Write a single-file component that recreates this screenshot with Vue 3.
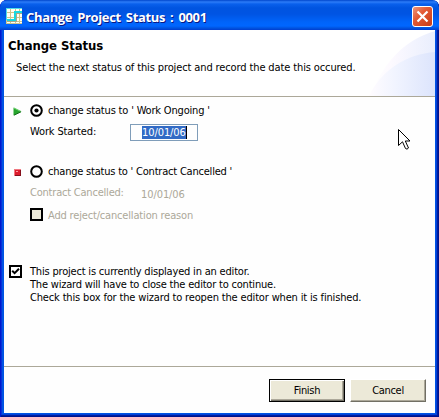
<script setup>
import { ref } from 'vue'

const choice = ref('ongoing')
const reopen = ref(true)
const date = '10/01/06'
</script>

<template>
  <main class="window">
    <header class="titlebar">
      <svg class="app-icon" width="16" height="16" viewBox="0 0 16 16" shape-rendering="crispEdges">
        <rect width="16" height="16" fill="#cdc48c" />
        <path d="M1 1h3v3H1zM5 1h4v3H5zM10 1h3v3H10zM14 1h2v3h-2zM1 5h3v4H1zM5 5h4v4H5zM10 5h3v4H10zM14 5h2v4h-2zM1 10h3v3H1zM5 10h4v3H5zM10 10h3v3H10zM14 10h2v3h-2zM1 14h3v1H1zM5 14h4v1H5zM10 14h3v1H10zM14 14h2v1h-2z" fill="#fffff4" />
        <path d="M0 .5H16M.5 0V12" fill="none" stroke="#52dce8" />
        <path d="M1 12H9V4H16" fill="none" stroke="#18d8e0" stroke-width="2" />
        <path d="M1 13.5H10.5V5.5H16" fill="none" stroke="#a8a888" />
      </svg>
      <h1 class="title">Change Project Status : 0001</h1>
      <button class="close" aria-label="Close">
        <svg width="21" height="21" viewBox="0 0 21 21">
          <defs>
            <linearGradient id="red" x1="0" y1="0" x2="1" y2="1">
              <stop offset="0" stop-color="#f09a80" />
              <stop offset=".4" stop-color="#e35a35" />
              <stop offset="1" stop-color="#c83a14" />
            </linearGradient>
          </defs>
          <rect x=".5" y=".5" width="20" height="20" rx="2.5" fill="url(#red)" stroke="#fff" />
          <path d="M5.5 5.5l10 10M15.5 5.5l-10 10" stroke="#fff" stroke-width="2.2" />
        </svg>
      </button>
    </header>

    <div class="client">
      <section class="banner">
        <svg class="swoosh" width="66" height="66" viewBox="0 0 66 66">
          <defs>
            <linearGradient id="fadeA" x1="0" y1="0" x2="1" y2="0">
              <stop offset="0" stop-color="#fff" />
              <stop offset=".3" stop-color="#fdfaff" />
              <stop offset="1" stop-color="#e9eefd" />
            </linearGradient>
            <linearGradient id="fadeB" x1="0" y1="0" x2="1" y2="0">
              <stop offset="0" stop-color="#fffcff" />
              <stop offset=".4" stop-color="#f1f4ff" />
              <stop offset="1" stop-color="#dce4fc" />
            </linearGradient>
          </defs>
          <path d="M2 66C12 36 34 10 66 1V66Z" fill="url(#fadeA)" />
          <path d="M0 66C12 40 38 24 66 22V66Z" fill="url(#fadeB)" />
        </svg>
        <h2 class="heading">Change Status</h2>
        <p class="intro">Select the next status of this project and record the date this occured.</p>
      </section>

      <section class="body">
        <div class="option">
          <svg class="marker" width="9" height="9" viewBox="0 0 9 9">
            <path d="M.5 .5L8.5 4.5L.5 8.5Z" fill="#27a52d" />
            <path d="M1 1L8 4.5" stroke="#75d577" />
            <path d="M1 8.2L8 4.8" stroke="#126a18" />
          </svg>
          <svg class="radio" width="13" height="13" viewBox="0 0 13 13" @click="choice = 'ongoing'">
            <circle cx="6.5" cy="6.5" r="5.3" fill="#fff" stroke="#000" stroke-width="2" />
            <circle v-if="choice === 'ongoing'" cx="6.5" cy="6.5" r="2.1" />
          </svg>
          <span class="t-ongoing">change status to ' Work Ongoing '</span>
        </div>
        <div class="field">
          <span class="label t-started">Work Started:</span>
          <div class="input"><span class="selected t-date">{{ date }}</span></div>
        </div>

        <div class="option second">
          <svg class="marker" width="9" height="9" viewBox="0 0 9 9" shape-rendering="crispEdges">
            <path d="M1 1h7v7H1z" fill="#dc1c2c" />
            <path d="M1 1h7v1H2v6H1z" fill="#f07880" />
            <path d="M7 2h1v6H2V7h5z" fill="#85101c" />
            <path d="M3 3h2v1H3z" fill="#ff9ca0" />
          </svg>
          <svg class="radio" width="13" height="13" viewBox="0 0 13 13" @click="choice = 'cancelled'">
            <circle cx="6.5" cy="6.5" r="5.3" fill="#fff" stroke="#000" stroke-width="2" />
            <circle v-if="choice === 'cancelled'" cx="6.5" cy="6.5" r="2.1" />
          </svg>
          <span class="t-contract">change status to ' Contract Cancelled '</span>
        </div>
        <div class="field disabled">
          <span class="label t-cancelled">Contract Cancelled:</span>
          <span class="plain-date t-date">{{ date }}</span>
        </div>
        <div class="reason disabled">
          <span class="check grey"></span>
          <span class="t-reason">Add reject/cancellation reason</span>
        </div>

        <div class="reopen">
          <span class="check" @click="reopen = !reopen">
            <svg v-if="reopen" width="9" height="9" viewBox="0 0 9 9">
              <path d="M1.2 3.8L3.6 6.2L8 1.8" fill="none" stroke="#000" stroke-width="2" />
            </svg>
          </span>
          <p class="note">
            <span class="t-n1">This project is currently displayed in an editor.</span>
            <span class="t-n2">The wizard will have to close the editor to continue.</span>
            <span class="t-n3">Check this box for the wizard to reopen the editor when it is finished.</span>
          </p>
        </div>
      </section>

      <footer class="footer">
        <button class="btn default"><span>Finish</span></button>
        <button class="btn"><span>Cancel</span></button>
      </footer>
    </div>

    <svg class="pointer" width="13" height="22" viewBox="0 0 13 22">
      <path d="M.5 .5V16.5L4.5 12.8L7.5 19.5Q9 21 10.5 19L7.3 12H12Z" fill="#fff" stroke="#000" />
    </svg>
  </main>
</template>

<style>
body {
  margin: 0;
  background: #fff;
}
</style>

<style scoped>
.window {
  position: relative;
  box-sizing: border-box;
  width: 439px;
  height: 417px;
  padding: 0 4px 4px;
  overflow: hidden;
  border-radius: 7px 7px 0 0;
  background: #0054e3;
  box-shadow: inset 1px 0 #0019cf, inset -1px -1px #00138c, inset -2px -2px #001ea0, inset 2px 0 #0831d9, inset -3px -3px #0441d8;
  font-family: "DejaVu Sans Condensed", "DejaVu Sans", sans-serif;
  font-stretch: condensed;
  font-size: 11px;
  line-height: 13px;
  color: #000;
  white-space: nowrap;
}
.titlebar {
  display: flex;
  align-items: center;
  box-sizing: border-box;
  height: 30px;
  margin: 0 -4px;
  padding: 2px 6px 0;
  border-radius: 7px 7px 0 0;
  background: linear-gradient(#0046cc 0, #2c7cf8 2px, #0960ec 4px, #0054e0 8px, #0054e3 14px, #0064fa 22px, #0066ff 26px, #0054e0 28px, #003dd0 30px);
}
.app-icon { flex: none; }
.title {
  flex: 1;
  margin: 2px 0 0 4px;
  font: bold 13px/18px "Open Sans", sans-serif;
  letter-spacing: -0.35px;
  word-spacing: 2px;
  color: #fff;
  text-shadow: 1px 1px #0a1883;
}
.close {
  width: 21px;
  height: 21px;
  padding: 0;
  border: 0;
  background: none;
}
.close svg { display: block; }
.client {
  display: flex;
  flex-direction: column;
  height: 383px;
  background: #fefefe;
}
.banner {
  position: relative;
  box-sizing: border-box;
  height: 67px;
  padding: 8px 0 0 4px;
  border-bottom: 1px solid #aca899;
  background: #fff;
}
.swoosh {
  position: absolute;
  right: 0;
  top: 0;
}
.heading {
  position: relative;
  margin: 0;
  font: bold 13px/16px "DejaVu Sans Condensed", "DejaVu Sans", sans-serif;
  font-stretch: condensed;
  letter-spacing: -0.08px;
}
.intro {
  position: relative;
  margin: 7px 0 0 8px;
  letter-spacing: -0.12px;
}
.body {
  flex: 1;
  padding: 7px 0 0 5px;
}
.option {
  display: flex;
  align-items: center;
  height: 13px;
}
.marker { margin: 1px 8px 0 4px; }
.radio { margin-right: 5px; }
.field {
  display: flex;
  margin-left: 21px;
  height: 17px;
  margin-top: 7px;
}
.label {
  width: 100px;
  padding-top: 1px;
}
.input {
  box-sizing: border-box;
  width: 68px;
  height: 17px;
  padding: 1px 0 0 11px;
  border: 1px solid #7f9db9;
}
.selected {
  display: inline-block;
  height: 13px;
  border-right: 1px solid #000;
  background: #316ac5;
  color: #fff;
}
.t-ongoing { letter-spacing: -0.18px; }
.t-started { letter-spacing: -0.15px; }
.t-contract { letter-spacing: -0.21px; }
.t-cancelled { letter-spacing: -0.21px; }
.t-date { letter-spacing: -0.08px; }
.t-reason { letter-spacing: -0.17px; }
.t-n1 { letter-spacing: -0.19px; }
.t-n2 { letter-spacing: -0.2px; }
.t-n3 { letter-spacing: -0.16px; }
.second { margin-top: 24px; }
.disabled { color: #aca899; }
.plain-date { padding: 3px 0 0 11px; }
.reason {
  display: flex;
  gap: 5px;
  height: 13px;
  margin: 6px 0 0 21px;
}
.t-reason { padding-top: 1px; }
.check {
  display: flex;
  flex: none;
  box-sizing: border-box;
  width: 13px;
  height: 13px;
  border: 2px solid #000;
  background: #fff;
}
.check.grey { background: #ece9d8; }
.reopen {
  display: flex;
  gap: 8px;
  margin-top: 44px;
}
.note {
  display: flex;
  flex-direction: column;
  margin: 0;
}
.footer {
  display: flex;
  justify-content: flex-end;
  gap: 5px;
  box-sizing: border-box;
  height: 47px;
  padding: 12px 9px 0 0;
  border-top: 1px solid #aca899;
}
.btn {
  box-sizing: border-box;
  width: 76px;
  height: 23px;
  padding: 0;
  border: 1px solid;
  border-color: #fff #716f64 #716f64 #fff;
  background: #ece9d8;
  box-shadow: inset -1px -1px #aca899;
  font: inherit;
  letter-spacing: -0.3px;
  color: #000;
}
.btn.default {
  border-color: #000;
  box-shadow: inset 1px 1px #fff, inset -1px -1px #716f64, inset -2px -2px #aca899;
}
.pointer {
  position: absolute;
  left: 398px;
  top: 129px;
}
</style>
